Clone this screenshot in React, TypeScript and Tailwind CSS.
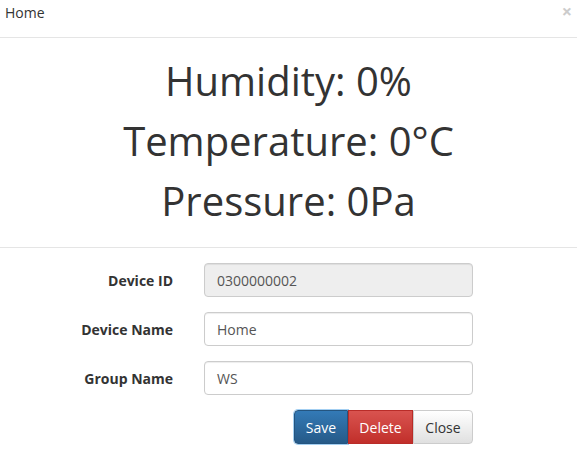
import React from "react";

export default function App() {
  const font = { fontFamily: '"Open Sans", "Noto Sans", sans-serif' };
  return (
    <div className="w-[577px] h-[470px] bg-white text-[#333] relative" style={font}>
      <div className="h-[38px] border-b border-[#e5e5e5] flex items-start pl-[5px] pt-[3px]">
        <span className="text-[14px] leading-[20px]">Home</span>
        <span className="absolute right-[2px] top-[1px] w-[16px] h-[20px] flex items-center justify-center text-[18px] font-bold leading-[20px] text-[#ccc]">×</span>
      </div>
      <div className="h-[210px] border-b border-[#e5e5e5] flex flex-col items-center pt-[13px]">
        <div className="text-[40px] leading-[60px]">Humidity: 0%</div>
        <div className="text-[40px] leading-[60px]">Temperature: 0°C</div>
        <div className="text-[40px] leading-[60px]">Pressure: 0Pa</div>
      </div>
      <div className="pt-[15px] flex flex-col gap-[15px]">
        <div className="flex items-center">
          <label className="w-[173px] text-right font-bold text-[14px]">Device ID</label>
          <div className="ml-[31px] w-[269px] h-[34px] border border-[#ccc] rounded-[4px] bg-[#eee] px-[12px] flex items-center text-[14px] text-[#555] shadow-[inset_0_1px_1px_rgba(0,0,0,0.075)]">0300000002</div>
        </div>
        <div className="flex items-center">
          <label className="w-[173px] text-right font-bold text-[14px]">Device Name</label>
          <div className="ml-[31px] w-[269px] h-[34px] border border-[#ccc] rounded-[4px] bg-white px-[12px] flex items-center text-[14px] text-[#555] shadow-[inset_0_1px_1px_rgba(0,0,0,0.075)]">Home</div>
        </div>
        <div className="flex items-center">
          <label className="w-[173px] text-right font-bold text-[14px]">Group Name</label>
          <div className="ml-[31px] w-[269px] h-[34px] border border-[#ccc] rounded-[4px] bg-white px-[12px] flex items-center text-[14px] text-[#555] shadow-[inset_0_1px_1px_rgba(0,0,0,0.075)]">WS</div>
        </div>
        <div className="flex pl-[294px]">
          <button className="w-[54px] h-[34px] text-[14px] text-white border border-[#245580] rounded-l-[4px] bg-gradient-to-b from-[#337ab7] to-[#265a88] shadow-[0_0_0_1px_rgba(102,175,233,0.6)]">Save</button>
          <button className="w-[65px] h-[34px] text-[14px] text-white border border-[#b92c28] bg-gradient-to-b from-[#d9534f] to-[#c12e2a]">Delete</button>
          <button className="w-[60px] h-[34px] text-[14px] text-[#333] border border-[#ccc] rounded-r-[4px] bg-gradient-to-b from-white to-[#e0e0e0]">Close</button>
        </div>
      </div>
    </div>
  );
}
